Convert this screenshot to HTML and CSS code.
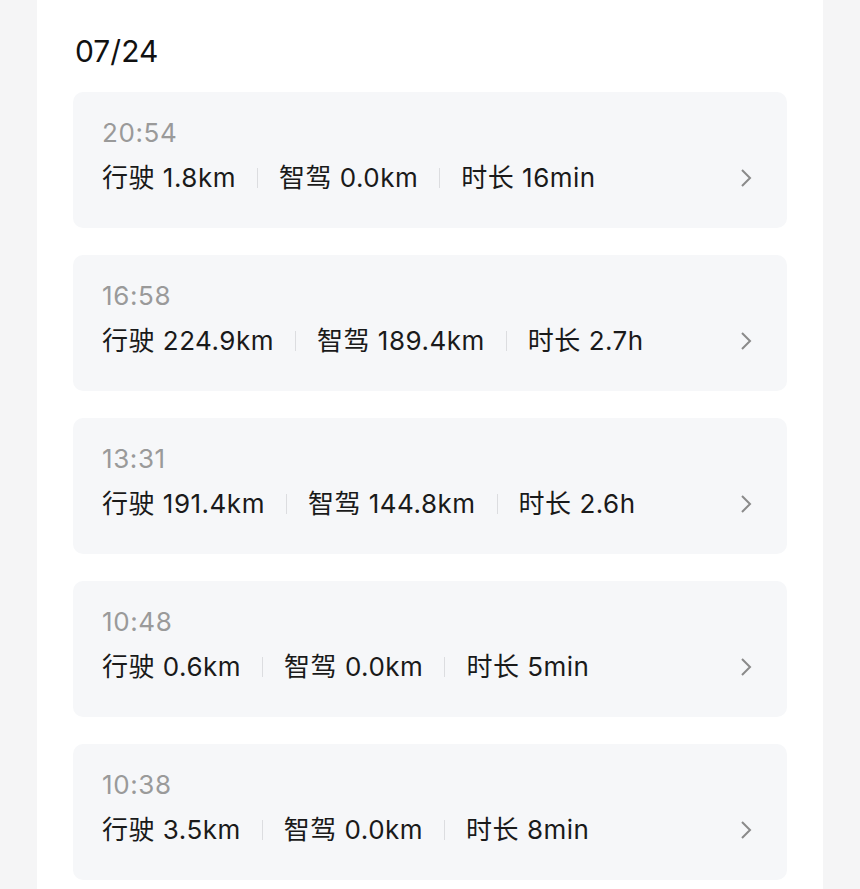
FILE: index.html
```html
<!DOCTYPE html>
<html lang="zh-CN">
<head>
    <meta charset="UTF-8">
    <meta name="viewport" content="width=device-width, initial-scale=1.0">
    <title>行程记录</title>
    <link rel="stylesheet" href="styles.css">
</head>
<body>
    <div class="panel">
        <h2 class="date">07/24</h2>
        <div class="trip-list">
            <div class="trip">
                <div class="time">20:54</div>
                <div class="stats">
                    <span>行驶 1.8km</span><i class="sep"></i>
                    <span>智驾 0.0km</span><i class="sep"></i>
                    <span>时长 16min</span>
                    <svg class="chevron" viewBox="0 0 12 20"><path d="M2 2l8 8-8 8"/></svg>
                </div>
            </div>
            <div class="trip">
                <div class="time">16:58</div>
                <div class="stats">
                    <span>行驶 224.9km</span><i class="sep"></i>
                    <span>智驾 189.4km</span><i class="sep"></i>
                    <span>时长 2.7h</span>
                    <svg class="chevron" viewBox="0 0 12 20"><path d="M2 2l8 8-8 8"/></svg>
                </div>
            </div>
            <div class="trip">
                <div class="time">13:31</div>
                <div class="stats">
                    <span>行驶 191.4km</span><i class="sep"></i>
                    <span>智驾 144.8km</span><i class="sep"></i>
                    <span>时长 2.6h</span>
                    <svg class="chevron" viewBox="0 0 12 20"><path d="M2 2l8 8-8 8"/></svg>
                </div>
            </div>
            <div class="trip">
                <div class="time">10:48</div>
                <div class="stats">
                    <span>行驶 0.6km</span><i class="sep"></i>
                    <span>智驾 0.0km</span><i class="sep"></i>
                    <span>时长 5min</span>
                    <svg class="chevron" viewBox="0 0 12 20"><path d="M2 2l8 8-8 8"/></svg>
                </div>
            </div>
            <div class="trip">
                <div class="time">10:38</div>
                <div class="stats">
                    <span>行驶 3.5km</span><i class="sep"></i>
                    <span>智驾 0.0km</span><i class="sep"></i>
                    <span>时长 8min</span>
                    <svg class="chevron" viewBox="0 0 12 20"><path d="M2 2l8 8-8 8"/></svg>
                </div>
            </div>
        </div>
    </div>
</body>
</html>
```
FILE: styles.css
```css
body {
    margin: 0;
    background-color: #f5f5f6;
    font-family: Inter, "Noto Sans CJK SC", sans-serif;
    color: #1a1a1a;
}

.panel {
    margin-left: 37px;
    width: 786px;
    min-height: 889px;
    box-sizing: border-box;
    background-color: #ffffff;
    padding: 33px 36px 0 36px;
}

.date {
    margin: 0 0 23px 2px;
    font-size: 30px;
    line-height: 36px;
    font-weight: 400;
    color: #111111;
}

.trip-list {
    display: flex;
    flex-direction: column;
    gap: 27px;
}

.trip {
    height: 136px;
    box-sizing: border-box;
    background-color: #f6f7f9;
    border-radius: 10px;
    padding: 26px 35px 0 29px;
}

.time {
    font-size: 26px;
    line-height: 30px;
    letter-spacing: 0.6px;
    color: #9a9a9a;
}

.stats {
    margin-top: 14px;
    display: flex;
    align-items: center;
    font-size: 26px;
    line-height: 32px;
    letter-spacing: 0.5px;
}

.sep {
    width: 1px;
    height: 20px;
    background-color: #dcdde0;
    margin: 0 21px;
}

.chevron {
    margin-left: auto;
    width: 12px;
    height: 20px;
    fill: none;
    stroke: #8a8a8a;
    stroke-width: 2;
}
```
